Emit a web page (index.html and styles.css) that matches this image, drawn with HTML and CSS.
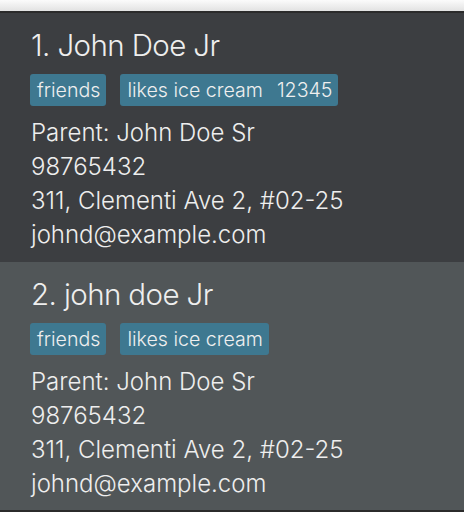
FILE: index.html
```html
<!DOCTYPE html>
<html>
<head>
<meta charset="utf-8">
<link rel="stylesheet" href="styles.css">
</head>
<body>
<div class="topbar"></div>
<div class="list">
  <div class="card card-odd">
    <div class="name">1. John Doe Jr</div>
    <div class="tags">
      <span class="tag">friends</span>
      <span class="tag">likes ice cream<span class="tag-extra">12345</span></span>
    </div>
    <div class="info">
      <div>Parent: John Doe Sr</div>
      <div>98765432</div>
      <div>311, Clementi Ave 2, #02-25</div>
      <div>johnd@example.com</div>
    </div>
  </div>
  <div class="card card-even">
    <div class="name">2. john doe Jr</div>
    <div class="tags">
      <span class="tag">friends</span>
      <span class="tag">likes ice cream</span>
    </div>
    <div class="info">
      <div>Parent: John Doe Sr</div>
      <div>98765432</div>
      <div>311, Clementi Ave 2, #02-25</div>
      <div>johnd@example.com</div>
    </div>
  </div>
</div>
<div class="bottombar"></div>
</body>
</html>
```
FILE: styles.css
```css
html, body {
  margin: 0;
  padding: 0;
  background: #3c3e41;
  width: 464px;
  height: 512px;
  overflow: hidden;
  font-family: Inter, Roboto, sans-serif;
  font-weight: 300;
  color: #eeeeee;
}
.topbar {
  height: 11px;
  background: linear-gradient(#fbfbfb, #e2e2e2);
  border-bottom: 2px solid #2b2b2b;
}
.card {
  padding: 12px 0 0 31px;
  box-sizing: border-box;
}
.card-odd {
  background: #3c3e41;
  height: 249px;
}
.card-even {
  background: #515658;
  height: 248px;
}
.name {
  font-size: 29.5px;
  line-height: 40px;
  letter-spacing: -0.6px;
  white-space: nowrap;
}
.tags {
  display: flex;
  gap: 14px;
  margin-top: 9px;
  margin-left: -1px;
}
.tag {
  background: #3e7890;
  border-radius: 3px;
  font-size: 19.6px;
  line-height: 32px;
  padding: 0 6px 0 7px;
  white-space: nowrap;
  color: #efefef;
}
.tag-extra {
  margin-left: 14px;
}
.info {
  margin-top: 10px;
  font-size: 24px;
  line-height: 34px;
  white-space: nowrap;
}
.bottombar {
  height: 2px;
  background: #2b2b2b;
}
```
